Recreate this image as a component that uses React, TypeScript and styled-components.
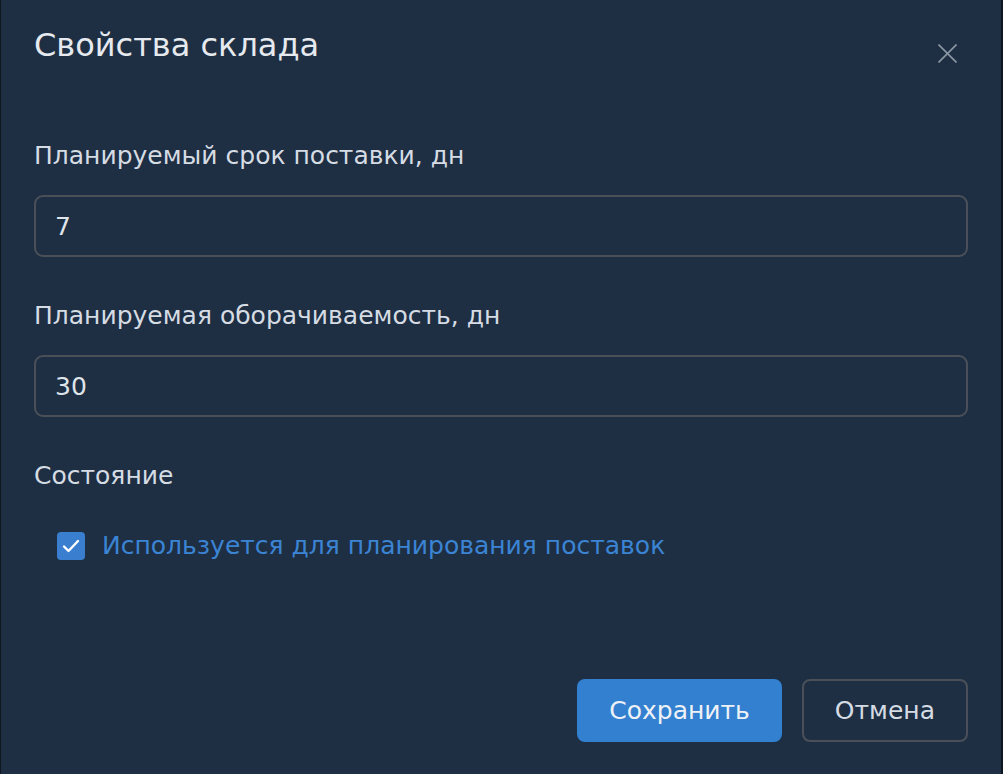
import React from "react";
import styled, { createGlobalStyle } from "styled-components";

const Global = createGlobalStyle`
  html, body { margin: 0; padding: 0; background: #0e1620; }
  body { font-family: "DejaVu Sans", "Noto Sans", sans-serif; overflow: hidden; }
  * { box-sizing: border-box; }
`;

const Dialog = styled.div`
  margin-left: 1px;
  width: 1000px;
  height: 774px;
  background: #1e2f44;
  display: flex;
  flex-direction: column;
  padding: 0 33px 32px 33px;
`;

const Header = styled.div`
  display: flex;
  align-items: flex-start;
  justify-content: space-between;
  padding-top: 23px;
  margin-bottom: 73px;
`;

const Title = styled.h1`
  margin: 0;
  font-size: 32px;
  line-height: 44px;
  font-weight: 400;
  color: #e6eaef;
`;

const CloseButton = styled.button`
  background: none;
  border: 0;
  padding: 0;
  margin-right: 7px;
  margin-top: 16px;
  width: 28px;
  height: 28px;
  display: flex;
  align-items: center;
  justify-content: center;
  color: #8c97a4;
  cursor: pointer;
`;

const Field = styled.div`
  display: flex;
  flex-direction: column;
  margin-bottom: 43px;
`;

const Label = styled.label<{ $gap?: number }>`
  font-size: 25px;
  line-height: 32px;
  color: #d6dce3;
  margin-bottom: ${(p) => p.$gap ?? 23}px;
`;

const Input = styled.input`
  height: 62px;
  width: 100%;
  border: 2px solid #4b5058;
  border-radius: 9px;
  background: transparent;
  color: #dfe4ea;
  font-family: inherit;
  font-size: 25px;
  padding: 0 19px;
  outline: none;
`;

const CheckRow = styled.label`
  display: flex;
  align-items: center;
  gap: 17px;
  padding-left: 23px;
  cursor: pointer;
`;

const Box = styled.span`
  width: 28px;
  height: 28px;
  border-radius: 4px;
  background: #3a7fcf;
  display: flex;
  align-items: center;
  justify-content: center;
  flex-shrink: 0;
`;

const CheckText = styled.span`
  font-size: 25px;
  line-height: 32px;
  color: #3b84d4;
`;

const Footer = styled.div`
  margin-top: auto;
  display: flex;
  justify-content: flex-end;
  gap: 20px;
`;

const Button = styled.button<{ $primary?: boolean }>`
  height: 63px;
  padding: 0 ${(p) => (p.$primary ? 32 : 31)}px;
  border-radius: 8px;
  font-family: inherit;
  font-size: 25px;
  cursor: pointer;
  background: ${(p) => (p.$primary ? "#3380d0" : "transparent")};
  color: ${(p) => (p.$primary ? "#eef2f6" : "#d6dce3")};
  border: ${(p) => (p.$primary ? "0" : "2px solid #4b5058")};
`;

export default function App() {
  return (
    <>
      <Global />
      <Dialog>
        <Header>
          <Title>Свойства склада</Title>
          <CloseButton aria-label="Закрыть">
            <svg width="19" height="19" viewBox="0 0 19 19" fill="none" stroke="currentColor" strokeWidth="1.6">
              <path d="M0.5 0.5L18.5 18.5M18.5 0.5L0.5 18.5" />
            </svg>
          </CloseButton>
        </Header>
        <Field>
          <Label>Планируемый срок поставки, дн</Label>
          <Input defaultValue="7" />
        </Field>
        <Field>
          <Label>Планируемая оборачиваемость, дн</Label>
          <Input defaultValue="30" />
        </Field>
        <Label $gap={38}>Состояние</Label>
        <CheckRow>
          <Box>
            <svg width="18" height="14" viewBox="0 0 18 14" fill="none" stroke="#fff" strokeWidth="2.4" strokeLinecap="round" strokeLinejoin="round">
              <path d="M2 7.5L6.5 12L16 2" />
            </svg>
          </Box>
          <CheckText>Используется для планирования поставок</CheckText>
        </CheckRow>
        <Footer>
          <Button $primary>Сохранить</Button>
          <Button>Отмена</Button>
        </Footer>
      </Dialog>
    </>
  );
}
